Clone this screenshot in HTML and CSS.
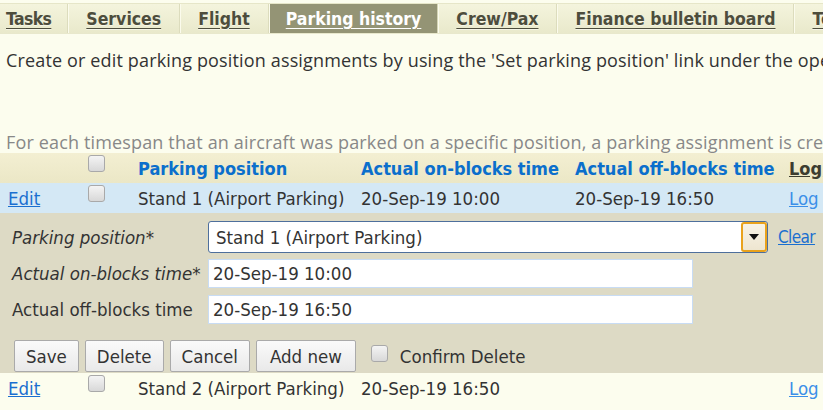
FILE: index.html
```html
<!DOCTYPE html>
<html>
<head>
<meta charset="utf-8">
<link rel="stylesheet" href="styles.css">
</head>
<body>
<div class="tabs">
  <a class="tab first">Tasks</a>
  <a class="tab">Services</a>
  <a class="tab">Flight</a>
  <a class="tab active">Parking history</a>
  <a class="tab">Crew/Pax</a>
  <a class="tab">Finance bulletin board</a>
  <a class="tab">Tech log</a>
</div>
<p class="intro">Create or edit parking position assignments by using the 'Set parking position' link under the operations menu of the flight.</p>
<p class="note">For each timespan that an aircraft was parked on a specific position, a parking assignment is created automatically.</p>
<table class="grid">
  <colgroup>
    <col class="c-edit"><col class="c-chk"><col class="c-pos"><col class="c-on"><col class="c-off"><col class="c-log">
  </colgroup>
  <thead>
    <tr class="head">
      <th></th>
      <th><span class="chk"></span></th>
      <th>Parking position</th>
      <th>Actual on-blocks time</th>
      <th>Actual off-blocks time</th>
      <th><a class="hlog">Log</a></th>
    </tr>
  </thead>
  <tbody>
    <tr class="row selected">
      <td><a class="link">Edit</a></td>
      <td><span class="chk"></span></td>
      <td>Stand 1 (Airport Parking)</td>
      <td>20-Sep-19 10:00</td>
      <td>20-Sep-19 16:50</td>
      <td><a class="log">Log</a></td>
    </tr>
    <tr class="editrow">
      <td colspan="6">
        <div class="form">
          <div class="frow f1">
            <label class="lbl req">Parking position*</label>
            <div class="select">
              <span class="sval">Stand 1 (Airport Parking)</span>
              <span class="sbtn"><span class="tri"></span></span>
            </div>
            <a class="link clear">Clear</a>
          </div>
          <div class="frow f2">
            <label class="lbl req">Actual on-blocks time*</label>
            <div class="input">20-Sep-19 10:00</div>
          </div>
          <div class="frow f3">
            <label class="lbl">Actual off-blocks time</label>
            <div class="input">20-Sep-19 16:50</div>
          </div>
          <div class="actions">
            <button class="btn">Save</button>
            <button class="btn">Delete</button>
            <button class="btn">Cancel</button>
            <button class="btn">Add new</button>
            <span class="chk confirm"></span><span class="ctext">Confirm Delete</span>
          </div>
        </div>
      </td>
    </tr>
    <tr class="row">
      <td><a class="link">Edit</a></td>
      <td><span class="chk"></span></td>
      <td>Stand 2 (Airport Parking)</td>
      <td>20-Sep-19 16:50</td>
      <td></td>
      <td><a class="log">Log</a></td>
    </tr>
  </tbody>
</table>
</body>
</html>
```
FILE: styles.css
```css
html, body {
  margin: 0;
  padding: 0;
  background: #fcfdee;
  overflow: hidden;
}
body {
  width: 823px;
  height: 410px;
  font-family: "DejaVu Sans Condensed", "DejaVu Sans", sans-serif;
  color: #333;
}
.tabs {
  display: flex;
  margin-top: 3px;
  height: 29px;
  background: linear-gradient(#f4f4dd, #e9e9cb);
  border-top: 1px solid #e6e6c8;
  border-bottom: 1px solid #e8e8cc;
  white-space: nowrap;
}
.tab {
  display: block;
  padding: 0 18px 0 18px;
  line-height: 30px;
  font-weight: bold;
  font-size: 17.5px;
  color: #4d4d3c;
  text-decoration: underline;
  text-underline-offset: 3px;
  border-right: 1px solid #dcdcbd;
  box-shadow: 1px 0 0 #fbfbec;
  text-shadow: 0 1px 0 rgba(255, 255, 255, 0.5);
}
.tab.first { padding-left: 6px; letter-spacing: -0.6px; padding-right: 16px; }
.tab.active {
  background: #949475;
  color: #fff;
  margin-left: 1px;
  border-right-color: #d4d4b4;
  padding: 0 16px 0 16px;
  text-shadow: none;
}
.intro {
  margin: 0;
  padding: 14px 0 0 6px;
  height: 24px;
  line-height: 24px;
  font-family: "Open Sans", sans-serif;
  font-size: 18px;
  color: #333;
  white-space: nowrap;
  letter-spacing: 0.15px;
}
.note {
  margin: 0;
  padding: 59px 0 0 6px;
  height: 22px;
  line-height: 22px;
  font-family: "Open Sans", sans-serif;
  font-size: 18px;
  color: #888;
  white-space: nowrap;
  letter-spacing: 0.15px;
}
.grid {
  border-collapse: collapse;
  table-layout: fixed;
  width: 860px;
  font-size: 18.5px;
}
.c-edit { width: 75px; }
.c-chk { width: 55px; }
.c-pos { width: 223px; }
.c-on { width: 214px; }
.c-off { width: 214px; }
.c-log { width: 79px; }
.grid th, .grid td {
  padding: 0 0 0 8px;
  text-align: left;
  white-space: nowrap;
  overflow: hidden;
}
.head {
  height: 30px;
  background: linear-gradient(#f3efd2, #ebe7c6);
}
.head th {
  color: #0b6fcc;
  font-weight: bold;
  font-size: 18px;
}
.hlog { color: #3c3c30; text-decoration: underline; }
.row { height: 30px; }
.row td { color: #333; }
.row.selected { background: #d4e8f5; }
.link { color: #1a6fd0; text-decoration: underline; }
.log { color: #3c8fe8; text-decoration: underline; }
.chk {
  display: inline-block;
  width: 15px;
  height: 15px;
  margin-left: 5px;
  border: 1px solid #a9a9a9;
  border-radius: 3px;
  background: linear-gradient(#f4f4f4, #d8d8d8);
  vertical-align: -1px;
  position: relative;
  top: -4px;
}
.editrow { background: #dddac5; }
.editrow > td { padding: 0; }
.form {
  display: flex;
  flex-direction: column;
  padding: 8px 0 1px 12px;
}
.frow {
  display: flex;
  align-items: center;
  height: 29px;
}
.f1 { height: 32px; }
.f2 { margin-top: 6px; }
.f3 { margin-top: 7px; }
.lbl {
  width: 196px;
  color: #333;
  white-space: nowrap;
}
.lbl.req { font-style: italic; }
.select {
  display: flex;
  align-items: center;
  width: 558px;
  height: 30px;
  background: #fff;
  border: 1px solid #4e6f9c;
  border-radius: 3px;
}
.sval { flex: 1; padding-left: 7px; color: #333; }
.sbtn {
  width: 22px;
  height: 26px;
  border: 2px solid #e9a21c;
  border-radius: 3px;
  background: linear-gradient(#f8f3e6, #eee6d0);
  display: flex;
  align-items: center;
  justify-content: center;
}
.tri {
  width: 0;
  height: 0;
  border-left: 5px solid transparent;
  border-right: 5px solid transparent;
  border-top: 6px solid #111;
}
.clear { margin-left: 10px; font-size: 17px; letter-spacing: -0.6px; }
.input {
  width: 479px;
  height: 27px;
  line-height: 27px;
  padding-left: 4px;
  background: #fff;
  border: 1px solid #c8dcf4;
  color: #333;
}
.actions {
  display: flex;
  align-items: center;
  gap: 6px;
  margin-top: 16px;
  height: 32px;
  padding-left: 2px;
}
.btn {
  height: 32px;
  padding: 0 11px;
  font-family: inherit;
  font-size: 18.5px;
  color: #333;
  background: linear-gradient(#fafafa, #e9e9e9);
  border: 1px solid #aaa;
  border-radius: 2px;
}
.btn:last-of-type { padding: 0 13px; }
.chk.confirm { margin-left: 9px; top: -3px; }
.ctext { margin-left: 6px; color: #333; }
```
